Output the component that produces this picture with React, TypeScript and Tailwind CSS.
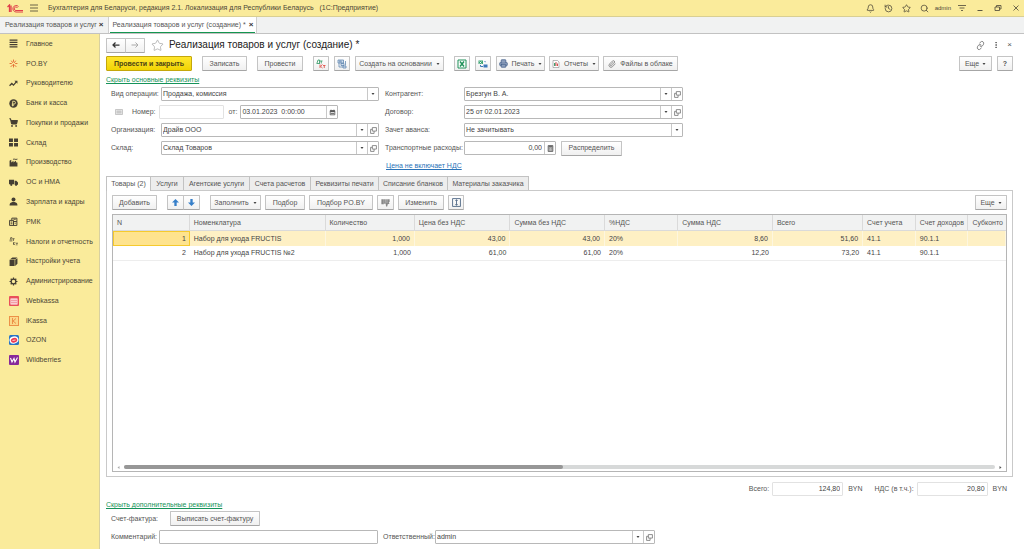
import React, { useState } from "react";
import { Bell, History, Star, Search, Link, Paperclip, Printer, ShoppingCart, MoreVertical } from "lucide-react";

const BTN = "flex h-[15px] shrink-0 items-center justify-center whitespace-nowrap rounded-[1px] border border-[#c4c4c4] border-b-[#a6a6a6] bg-linear-to-b from-white to-[#f0f0f0] text-[#555]";

function Btn({ children, className = "", label }: { children: React.ReactNode; className?: string; label?: string }) {
  return <button type="button" aria-label={label} className={`${BTN} ${className}`}>{children}</button>;
}

function Caret() {
  return <svg viewBox="0 0 6 4" className="h-[2px] w-[4px]"><path d="M0 0h6L3 4z" fill="#444" /></svg>;
}

function OpenIcon() {
  return (
    <svg viewBox="0 0 12 12" className="h-[7px] w-[7px]" fill="none" stroke="#777" strokeWidth="1.4">
      <path d="M4 1h7v6H4zM4 4H1v7h6V7" />
    </svg>
  );
}

function CalendarIcon() {
  return <svg viewBox="0 0 12 12" className="h-[7px] w-[7px]"><path d="M2 3h8v7H2z" fill="#ddd" stroke="#555" strokeWidth="1.3" /><path d="M2 2h8v3H2zM3 1h1v3H3zM8 1h1v3H8zM3 7h6v1H3z" fill="#555" /></svg>;
}

function CalcIcon() {
  return <svg viewBox="0 0 12 12" className="h-[7px] w-[7px]"><path d="M2 1h8v10H2z" fill="#bbb" stroke="#555" strokeWidth="1.4" /><path d="M3 2h6v2H3zM4 6h1v1H4zM7 6h1v1H7zM4 8h1v1H4zM7 8h1v1H7z" fill="#555" /></svg>;
}

type Tool = "drop" | "open" | "cal" | "calc";
const toolNames: Record<Tool, string> = { drop: "Выбрать", open: "Открыть", cal: "Календарь", calc: "Калькулятор" };

function Field({ id, value, tools = [], className = "", right = false, soft = false }: { id: string; value: string; tools?: Tool[]; className?: string; right?: boolean; soft?: boolean }) {
  return (
    <div className={`flex h-[14px] min-w-0 overflow-hidden rounded-[1px] border bg-white ${soft ? "border-[#e2e2e2]" : "border-[#b8b8b8]"} ${className}`}>
      <input id={id} defaultValue={value} className={`w-full min-w-0 flex-1 bg-transparent text-[#444] outline-none ${right ? "pr-[2px] text-right" : "pl-[1px]"}`} />
      {tools.map((t) => (
        <button key={t} type="button" aria-label={toolNames[t]} className="flex w-[11px] shrink-0 items-center justify-center border-l border-[#c8c8c8]">
          {t === "drop" && <Caret />}
          {t === "open" && <OpenIcon />}
          {t === "cal" && <CalendarIcon />}
          {t === "calc" && <CalcIcon />}
        </button>
      ))}
    </div>
  );
}

function Row({ id, label, labelWidth, children }: { id: string; label: string; labelWidth: string; children: React.ReactNode }) {
  return (
    <div className="flex h-[14px] items-center">
      <label htmlFor={id} className={`shrink-0 whitespace-nowrap ${labelWidth}`}>{label}</label>
      {children}
    </div>
  );
}

const dark = "#453f33";
function Glyph({ children }: { children: React.ReactNode }) {
  return <svg viewBox="0 0 16 16" className="h-[9px] w-[9px]" fill={dark}>{children}</svg>;
}

const nav: { name: string; icon: React.ReactNode }[] = [
  { name: "Главное", icon: <Glyph><path d="M1 1h14v2H1zM1 5h14v2H1zM1 9h14v2H1zM1 13h14v2H1z" /></Glyph> },
  { name: "PO.BY", icon: <Glyph><g stroke="#e3662f" strokeWidth="1.6" fill="none"><path d="M8 1v4M8 9v6M1 8h4M11 8h4M4 3l3 4M12 3L9 7M3 14l4-4M13 14l-4-4" /></g></Glyph> },
  { name: "Руководителю", icon: <Glyph><path d="M1 12l4-4 3 3 5-6" fill="none" stroke={dark} strokeWidth="2.2" /><path d="M9.500 3H15v5.500z" /></Glyph> },
  { name: "Банк и касса", icon: <Glyph><circle cx="8" cy="8" r="7.500" /><path d="M6.500 13V4h2.500a2.500 2.500 0 0 1 0 5H5M5 11h4" fill="none" stroke="#faeb9b" strokeWidth="1.500" /></Glyph> },
  { name: "Покупки и продажи", icon: <ShoppingCart size={9} strokeWidth={3} color={dark} fill={dark} /> },
  { name: "Склад", icon: <Glyph><path d="M0 1h7v6H0zM9 1h7v6H9zM0 9h7v6H0zM9 9h7v6H9z" /></Glyph> },
  { name: "Производство", icon: <Glyph><path d="M1 15V5l3-2v5l4-3v3l4-3 1 3h2v7z" /><path d="M7 3c2-3 4 1 8-1" fill="none" stroke={dark} strokeWidth="1.600" /></Glyph> },
  { name: "ОС и НМА", icon: <Glyph><path d="M0 3h9v8H0zM10 5h3l3 3v4h-6z" /><circle cx="4" cy="12" r="2" /><circle cx="12.500" cy="12" r="2" /></Glyph> },
  { name: "Зарплата и кадры", icon: <Glyph><circle cx="8" cy="4.500" r="3.500" /><path d="M1 15c0-4 2-5 5-6h4c3 1 5 2 5 6z" /></Glyph> },
  { name: "РМК", icon: <Glyph><g fill="none" stroke={dark} strokeWidth="1.700"><path d="M1 6h7v9H1zM8 8h6v7H8zM5 6V2h9v6M8 4h4M3 9h3M3 12h3M10 11h2" /></g></Glyph> },
  { name: "Налоги и отчетность", icon: <Glyph><g fill="none" stroke={dark} strokeWidth="1.200"><path d="M1 7h5M2 6l1-5h2v5M6 3h4M8 3v4M8 9v5M11 9l-3 3 3 2M12 11h4M14 11v4" /></g></Glyph> },
  { name: "Настройки учета", icon: <Glyph><path d="M1 5h9v11H1zM2 4l4-3h9l-4 3zM11 5l4-3v10l-4 4z" /></Glyph> },
  { name: "Администрирование", icon: <Glyph><circle cx="8" cy="8" r="4.200" fill="none" stroke={dark} strokeWidth="2.200" /><path d="M8 1v3M8 12v3M1 8h3M12 8h3M3 3l2 2M11 11l2 2M13 3l-2 2M5 11l-2 2" stroke={dark} strokeWidth="2.200" /></Glyph> },
  { name: "Webkassa", icon: <svg viewBox="0 0 20 20" className="size-[10px]"><rect width="20" height="20" rx="2" fill="#e9505b" /><path d="M3 5h14v12H3z" fill="#fff" /><path d="M5 7h2v3H5zM9 7h2v3H9zM13 7h2v3h-2zM5 11h2v4H5zM9 11h2v4H9zM13 11h2v4h-2z" fill="#e53f4e" /></svg> },
  { name: "iKassa", icon: <svg viewBox="0 0 20 20" className="size-[10px]"><rect x="1" y="1" width="18" height="18" fill="#fbd98a" stroke="#ec9148" strokeWidth="2" /><path d="M7 4v12M14 5l-6 5 6 5" fill="none" stroke="#ec9148" strokeWidth="2" /></svg> },
  { name: "OZON", icon: <svg viewBox="0 0 20 20" className="size-[10px]"><rect width="20" height="20" rx="3" fill="#2874c5" /><ellipse cx="10" cy="10" rx="9" ry="7" fill="#fff" transform="rotate(-15 10 10)" /><ellipse cx="10" cy="10.500" rx="6.500" ry="4.500" fill="#ed3b50" transform="rotate(-15 10 10)" /><path d="M7 11l6-1" stroke="#fff" strokeWidth="1.500" /></svg> },
  { name: "Wildberries", icon: <svg viewBox="0 0 20 20" className="size-[10px]"><rect width="20" height="20" rx="2" fill="#87299a" /><path d="M3 6l3 8 4-7 2 7 5-9" fill="none" stroke="#fff" strokeWidth="2.200" /></svg> },
];

const tabs = ["Товары (2)", "Услуги", "Агентские услуги", "Счета расчетов", "Реквизиты печати", "Списание бланков", "Материалы заказчика"];
const tabWidths = ["w-[45px]", "w-[33px]", "w-[66px]", "w-[61px]", "w-[68px]", "w-[69px]", "w-[81px]"];
const headers = ["N", "Номенклатура", "Количество", "Цена без НДС", "Сумма без НДС", "%НДС", "Сумма НДС", "Всего", "Счет учета", "Счет доходов", "Субконто"];
const colWidths = ["w-[8.6%]", "w-[15.2%]", "w-[10%]", "w-[10.7%]", "w-[10.6%]", "w-[8.2%]", "w-[10.6%]", "w-[10.1%]", "w-[5.9%]", "w-[5.9%]", ""];
const rightCols = [0, 2, 3, 4, 6, 7];
const rows = [
  ["1", "Набор для ухода FRUCTIS", "1,000", "43,00", "43,00", "20%", "8,60", "51,60", "41.1", "90.1.1", ""],
  ["2", "Набор для ухода FRUCTIS №2", "1,000", "61,00", "61,00", "20%", "12,20", "73,20", "41.1", "90.1.1", ""],
];

function TopBar() {
  return (
    <header className="flex h-[17px] items-center border-b border-[#d9cf93] bg-[#faeb9b] pl-[7px] pr-[4px] text-[#4b4637]">
      <svg viewBox="0 0 32 18" className="h-[9px] w-[16px]" fill="none" stroke="#e0404a" strokeWidth="2.600">
        <path d="M1 6l4-4v14M8 3v13" />
        <path d="M23 5a6.500 6.500 0 1 0-5 11h14M21 8a3.500 3.500 0 1 0-3 5h14" strokeWidth="2" />
      </svg>
      <button type="button" aria-label="Меню" className="ml-[7px]">
        <svg viewBox="0 0 16 16" className="size-[8px]" stroke="#5c563f" strokeWidth="1.800"><path d="M0 2h16M0 8h16M0 14h16" /></svg>
      </button>
      <span className="ml-[10px] flex-1 whitespace-pre">Бухгалтерия для Беларуси, редакция 2.1. Локализация для Республики Беларусь   (1С:Предприятие)</span>
      <div className="flex items-center gap-[9px]">
        <button type="button" aria-label="Уведомления"><Bell size={9} /></button>
        <button type="button" aria-label="История"><History size={9} /></button>
        <button type="button" aria-label="Избранное"><Star size={9} /></button>
        <button type="button" aria-label="Поиск"><Search size={9} /></button>
      </div>
      <span className="ml-[6px] text-[6px]">admin</span>
      <div className="ml-[7px] flex items-center gap-[10px]">
        <button type="button" aria-label="Настройки"><svg viewBox="0 0 16 16" className="size-[8px]" fill="none" stroke="#4b4637" strokeWidth="1.600"><path d="M0 3h16M3 8h10M6 12l2 2 2-2" /></svg></button>
        <button type="button" aria-label="Свернуть"><svg viewBox="0 0 16 16" className="size-[8px]" stroke="#4b4637" strokeWidth="1.800"><path d="M3 13h10" /></svg></button>
        <button type="button" aria-label="Развернуть"><svg viewBox="0 0 16 16" className="size-[8px]" fill="none" stroke="#4b4637" strokeWidth="1.600"><path d="M2 6h9v7H2zM5 6V3h9v7h-3" /></svg></button>
        <button type="button" aria-label="Закрыть"><svg viewBox="0 0 16 16" className="size-[8px]" stroke="#4b4637" strokeWidth="1.600"><path d="M3 3l10 10M13 3L3 13" /></svg></button>
      </div>
    </header>
  );
}

function GoodsTable() {
  return (
    <div className="mt-[4px] flex h-[258px] flex-col overflow-hidden border border-[#b5b5b5]">
      <table className="w-full table-fixed border-separate border-spacing-0">
        <thead>
          <tr className="h-[16px] bg-[#f1f2f2]">
            {headers.map((h, i) => (
              <th key={h} className={`overflow-hidden whitespace-nowrap border-b border-r border-[#dadada] pl-[4px] text-left font-normal last:border-r-0 ${colWidths[i]}`}>{h}</th>
            ))}
          </tr>
        </thead>
        <tbody>
          {rows.map((r, n) => (
            <tr key={r[0]} className={`h-[15px] ${n === 0 ? "bg-[#fef0c4]" : ""}`}>
              {r.map((c, i) => (
                <td key={i} className={`whitespace-nowrap pl-[4px] pr-[4px] text-[#444] ${n === 0 ? (i === 0 ? "bg-[#fee38e] outline outline-1 -outline-offset-1 outline-[#f6ca2d]" : "border-r border-[#fdf6df]") : "border-b border-[#ededed]"} ${rightCols.includes(i) ? "text-right" : ""}`}>{c}</td>
              ))}
            </tr>
          ))}
        </tbody>
      </table>
      <div className="mt-auto flex h-[8px] items-center gap-[4px] px-[4px]">
        <svg viewBox="0 0 4 6" className="h-[3px] w-[3px]"><path d="M4 0v6L0 3z" fill="#aaa" /></svg>
        <div className="h-[4px] flex-1 rounded-full bg-[#d7d9d9]"><div className="h-full w-[50.4%] rounded-full bg-[#979797]" /></div>
        <svg viewBox="0 0 4 6" className="h-[3px] w-[3px]"><path d="M0 0v6l4-3z" fill="#555" /></svg>
      </div>
    </div>
  );
}

export default function App() {
  const [active, setActive] = useState(0);
  return (
    <div className="flex min-h-screen flex-col bg-white font-['Liberation_Sans',Arial,sans-serif] text-[7px] leading-[10px] text-[#555]">
      <TopBar />
      <div className="flex h-[17px] border-b border-[#c2c2c2] bg-[#f1f2f2]">
        <div className="flex items-center border-r border-[#cfcfcf] pl-[5px] pr-[4px]">
          <a href="#list">Реализация товаров и услуг</a>
          <button type="button" aria-label="Закрыть вкладку" className="ml-[2px] text-[8px] font-bold text-[#333]">×</button>
        </div>
        <div className="flex border-r border-[#cfcfcf] bg-white px-[1px]">
          <div className="flex items-center border-b border-[#149650] pl-[3px] pr-[2px]">
            <a href="#new">Реализация товаров и услуг (создание) *</a>
            <button type="button" aria-label="Закрыть вкладку" className="ml-[3px] text-[8px] font-bold text-[#333]">×</button>
          </div>
        </div>
      </div>
      <div className="flex flex-1">
        <nav className="w-[100px] shrink-0 border-r border-[#d8d0a0] bg-[#faeb9b]">
          <div className="grid h-[336px] auto-rows-fr">
            {nav.map((n) => (
              <a key={n.name} href="#section" className="flex items-center whitespace-nowrap text-[#4b4637]">
                <span className="ml-[8px] mr-[7px] flex w-[11px] justify-center">{n.icon}</span>{n.name}
              </a>
            ))}
          </div>
        </nav>
        <main className="min-w-0 flex-1 pb-[4px] pl-[6px] pr-[11px] pt-[4px]">
          <div className="flex h-[14px] items-center">
            <div className="flex">
              <Btn label="Назад" className="h-[13px] w-[20px]"><svg viewBox="0 0 16 12" className="h-[6px] w-[8px]" fill="none" stroke="#333" strokeWidth="2.500"><path d="M15 6H2M7 1L2 6l5 5" /></svg></Btn>
              <Btn label="Вперед" className="-ml-px h-[13px] w-[20px]"><svg viewBox="0 0 16 12" className="h-[6px] w-[8px]" fill="none" stroke="#aaa" strokeWidth="2"><path d="M1 6h13M9 1l5 5-5 5" /></svg></Btn>
            </div>
            <button type="button" aria-label="В избранное" className="ml-[6px]"><Star size={13} strokeWidth={1.2} color="#999" /></button>
            <h1 className="ml-[5px] flex-1 whitespace-nowrap text-[10px] text-[#222]">Реализация товаров и услуг (создание) *</h1>
            <div className="flex items-center gap-[7px] pr-px">
              <button type="button" aria-label="Ссылка"><Link size={9} color="#666" className="-rotate-12" /></button>
              <button type="button" aria-label="Действия"><MoreVertical size={8} strokeWidth={3} color="#666" /></button>
              <button type="button" aria-label="Закрыть" className="text-[8px]">×</button>
            </div>
          </div>

          <div className="mt-[4px] flex items-center">
            <button type="button" className="h-[15px] w-[86px] shrink-0 rounded-[1px] border border-[#c4a70c] bg-linear-to-b from-[#ffe62a] to-[#f1d400] font-bold text-[#4b4414]">Провести и закрыть</button>
            <Btn className="ml-[10px] w-[45px]">Записать</Btn>
            <Btn className="ml-[10px] w-[46px]">Провести</Btn>
            <Btn className="ml-[10px] w-[16px]" label="Движения документа"><svg viewBox="0 0 20 20" className="size-[10px]" fill="none" strokeWidth="1.700"><path d="M1 9h7M2 8l2-6h3v6M8 4h5M10.500 4v5" stroke="#349966" /><path d="M8 11v7M13 11l-4 3.500 4 3.500M14 13h5M16.500 13v5" stroke="#dd4b42" /></svg></Btn>
            <Btn className="ml-[5px] w-[16px]" label="Структура подчиненности"><svg viewBox="0 0 20 20" className="size-[10px]" fill="#d5e1ef" stroke="#5b83ad" strokeWidth="1.500"><path d="M2 2h11v6H2zM8 9h6v4H8zM12 14h6v4h-6z" /><path d="M4 4h5M4 6h6M4 8v8h8M17 4v9" fill="none" /></svg></Btn>
            <Btn className="ml-[5px] w-[89px] gap-[4px]">Создать на основании<Caret /></Btn>
            <Btn className="ml-[10px] w-[16px]" label="Excel"><svg viewBox="0 0 20 20" className="size-[10px]" fill="#fff" stroke="#21925b" strokeWidth="2"><path d="M2 2h16v16H2z" /><path d="M6 5l8 10M14 5L6 15" strokeWidth="3" /></svg></Btn>
            <Btn className="ml-[5px] w-[16px]" label="Обмен"><svg viewBox="0 0 20 20" className="size-[10px]"><path d="M1 3h9v7H1z" fill="#3ba373" /><path d="M3 5l4 4M7 5L3 9" stroke="#fff" strokeWidth="1.500" /><path d="M11 11h8v6h-8zM12 4h3v3" fill="#3c78ba" /><path d="M5 12v3h5" stroke="#3c78ba" fill="none" strokeWidth="2" /></svg></Btn>
            <Btn className="ml-[5px] w-[49px] gap-[4px]"><Printer size={9} color="#425d89" fill="#8d9fbd" />Печать<Caret /></Btn>
            <Btn className="ml-[4px] w-[50px] gap-[4px]"><svg viewBox="0 0 16 16" className="size-[8px]"><path d="M2 1h9l3 3v11H2z" fill="#fff" stroke="#777" /><path d="M4 6h3v6H4z" fill="#3aa573" /><path d="M7 4h2v8H7zM10 7h2v5h-2z" fill="#d74e50" /></svg>Отчеты<Caret /></Btn>
            <Btn className="ml-[4px] w-[75px] gap-[4px]"><Paperclip size={8} color="#666" />Файлы в облаке</Btn>
            <Btn className="ml-auto w-[33px] gap-[3px]">Еще<Caret /></Btn>
            <Btn className="ml-[5px] w-[16px] font-bold">?</Btn>
          </div>

          <a href="#main-fields" className="mt-[4px] block w-fit text-[#16935a] underline">Скрыть основные реквизиты</a>

          <div className="mt-[2px] flex gap-[6px]">
            <div className="flex w-[273px] flex-col gap-[4px] pl-[5px]">
              <Row id="op" label="Вид операции:" labelWidth="w-[50px]"><Field id="op" value="Продажа, комиссия" tools={["drop"]} className="flex-1" /></Row>
              <Row id="num" label="Номер:" labelWidth="order-1 mr-[3px]">
                <svg viewBox="0 0 16 12" className="ml-[4px] mr-[9px] h-[6px] w-[8px]" fill="#eee" stroke="#999"><path d="M1 1h14v10H1zM3 4h10M3 6h10M3 8h10" /></svg>
                <Field id="num" value="" soft className="order-2 w-[65px]" />
                <label htmlFor="date" className="order-3 ml-[5px] mr-[3px]">от:</label>
                <Field id="date" value="03.01.2023  0:00:00" tools={["cal"]} className="order-4 w-[98px]" />
              </Row>
              <Row id="org" label="Организация:" labelWidth="w-[50px]"><Field id="org" value="Драйв ООО" tools={["drop", "open"]} className="flex-1" /></Row>
              <Row id="store" label="Склад:" labelWidth="w-[50px]"><Field id="store" value="Склад Товаров" tools={["drop", "open"]} className="flex-1" /></Row>
            </div>
            <div className="flex w-[298px] flex-col gap-[4px]">
              <Row id="agent" label="Контрагент:" labelWidth="w-[79px]"><Field id="agent" value="Брезгун В. А." tools={["drop", "open"]} className="flex-1" /></Row>
              <Row id="contract" label="Договор:" labelWidth="w-[79px]"><Field id="contract" value="25 от 02.01.2023" tools={["drop", "open"]} className="flex-1" /></Row>
              <Row id="advance" label="Зачет аванса:" labelWidth="w-[79px]"><Field id="advance" value="Не зачитывать" tools={["drop"]} className="flex-1" /></Row>
              <Row id="transport" label="Транспортные расходы:" labelWidth="w-[79px]">
                <Field id="transport" value="0,00" right tools={["calc"]} className="w-[92px]" />
                <Btn className="ml-[5px] w-[61px]">Распределить</Btn>
              </Row>
              <a href="#price" className="ml-px mt-[2px] w-fit text-[#2b73b8] underline">Цена не включает НДС</a>
            </div>
          </div>

          <div role="tablist" className="mt-[5px] flex h-[14px]">
            {tabs.map((t, i) => (
              <button key={t} role="tab" aria-selected={active === i} type="button" onClick={() => setActive(i)} className={`shrink-0 whitespace-nowrap border-r border-t border-[#c2c2c2] first:border-l ${tabWidths[i]} ${active === i ? "z-10 -mb-px bg-white" : "bg-[#ededed]"}`}>{t}</button>
            ))}
          </div>
          <section className="border border-[#c9c9c9] px-[5px] pb-[4px] pt-[4px]">
            <div className="flex items-center">
              <Btn className="w-[45px]">Добавить</Btn>
              <Btn className="ml-[10px] w-[17px]" label="Вверх"><svg viewBox="0 0 12 12" className="size-[7px]"><path d="M6 0l6 6H8v6H4V6H0z" fill="#367fc9" /></svg></Btn>
              <Btn className="-ml-px w-[17px]" label="Вниз"><svg viewBox="0 0 12 12" className="size-[7px]"><path d="M6 12l6-6H8V0H4v6H0z" fill="#367fc9" /></svg></Btn>
              <Btn className="ml-[10px] w-[51px] gap-[4px]">Заполнить<Caret /></Btn>
              <Btn className="ml-[4px] w-[40px]">Подбор</Btn>
              <Btn className="ml-[4px] w-[64px]">Подбор PO.BY</Btn>
              <Btn className="ml-[4px] w-[17px]" label="Штрихкод"><svg viewBox="0 0 16 16" className="size-[9px]" fill="#555"><path d="M1 2h2v9H1zM4 2h1v9H4zM6 2h2v8H6zM9 2h1v6H9zM11 2h1v5h-1zM13 2h2v5h-2z" /><path d="M8 8l6-1 1 3-3 1-1 4H9z" fill="#888" /></svg></Btn>
              <Btn className="ml-[4px] w-[46px]">Изменить</Btn>
              <Btn className="ml-[4px] w-[16px]" label="Высота строк"><svg viewBox="0 0 16 16" className="size-[9px]" fill="none" stroke="#46607f" strokeWidth="1.500"><path d="M1 1h14v14H1zM8 3v10M6 5l2-2 2 2M6 11l2 2 2-2" /></svg></Btn>
              <Btn className="ml-auto w-[32px] gap-[3px]">Еще<Caret /></Btn>
            </div>
            <GoodsTable />
          </section>

          <div className="mt-[5px] flex items-center justify-end pr-[6px]">
            <label htmlFor="total" className="mr-[3px]">Всего:</label>
            <Field id="total" value="124,80" right soft className="w-[71px]" /><span className="ml-[5px]">BYN</span>
            <label htmlFor="vat" className="ml-[12px] mr-[3px]">НДС (в т.ч.):</label>
            <Field id="vat" value="20,80" right soft className="w-[71px]" /><span className="ml-[5px]">BYN</span>
          </div>

          <a href="#extra-fields" className="mt-[4px] block w-fit text-[#16935a] underline">Скрыть дополнительные реквизиты</a>
          <div className="mt-px flex items-center pl-[5px]">
            <span className="w-[59px]">Счет-фактура:</span>
            <Btn className="w-[90px]">Выписать счет-фактуру</Btn>
          </div>
          <div className="mt-[4px] flex items-center pl-[5px]">
            <label htmlFor="comment" className="w-[48px]">Комментарий:</label>
            <Field id="comment" value="" className="w-[219px]" />
            <label htmlFor="resp" className="ml-[5px] w-[52px]">Ответственный:</label>
            <Field id="resp" value="admin" tools={["drop", "open"]} className="w-[220px]" />
          </div>
        </main>
      </div>
    </div>
  );
}
